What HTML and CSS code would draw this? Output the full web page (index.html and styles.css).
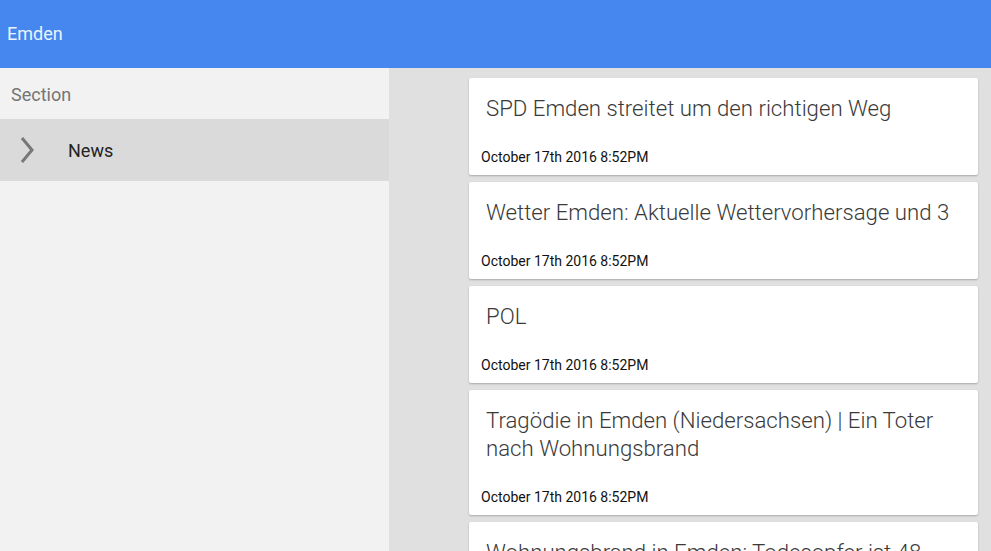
FILE: index.html
```html
<!doctype html>
<html>
<head>
<meta charset="utf-8">
<title>Emden</title>
<link rel="stylesheet" href="styles.css">
</head>
<body>
<div class="bar">Emden</div>
<div class="main">
    <div class="side">
        <p class="head">Section</p>
        <div class="item">
            <svg class="chev" width="16" height="28" viewBox="0 0 16 28"><path d="M3 2 L13 14 L3 26" fill="none" stroke="#777" stroke-width="3"/></svg>
            <span>News</span>
        </div>
    </div>
    <ul class="list">
        <li><h2>SPD Emden streitet um den richtigen Weg</h2><p>October 17th 2016 8:52PM</p></li>
        <li><h2>Wetter Emden: Aktuelle Wettervorhersage und 3</h2><p>October 17th 2016 8:52PM</p></li>
        <li><h2>POL</h2><p>October 17th 2016 8:52PM</p></li>
        <li><h2>Tragödie in Emden (Niedersachsen) | Ein Toter nach Wohnungsbrand</h2><p>October 17th 2016 8:52PM</p></li>
        <li><h2>Wohnungsbrand in Emden: Todesopfer ist 48</h2><p>October 17th 2016 8:52PM</p></li>
    </ul>
</div>
</body>
</html>
```
FILE: styles.css
```css
* { padding: 0; margin: 0; }
li { list-style: none; }
html, body { height: 100%; overflow: hidden; }
body { font-family: Roboto, "Liberation Sans", sans-serif; background: #e0e0e0; }
.bar { height: 68px; background: #4587ee; color: #eaf4ff; font-size: 18px; line-height: 68px; padding-left: 7px; }
.main { display: flex; height: 483px; }
.side { width: 389px; background: #f2f2f2; flex-shrink: 0; }
.side .head { height: 51px; line-height: 54px; padding-left: 11px; font-size: 18px; color: #757575; }
.side .item { height: 62px; background: #dadada; display: flex; align-items: center; }
.side .chev { margin-left: 19px; }
.side .item span { margin-left: 33px; font-size: 18px; color: #222; }
.list { flex: 1; padding: 10px 13px 0 80px; display: flex; flex-direction: column; gap: 7px; }
.list li { background: #fff; border-radius: 2px; box-shadow: 0 1px 2px rgba(0,0,0,0.25); padding: 16px 12px 9px 12px; }
.list h2 { font-weight: 300; font-size: 22.2px; line-height: 28px; color: #3a3a3a; padding-left: 5px; }
.list p { font-size: 14px; line-height: 17px; color: #111; margin-top: 27px; }
```
